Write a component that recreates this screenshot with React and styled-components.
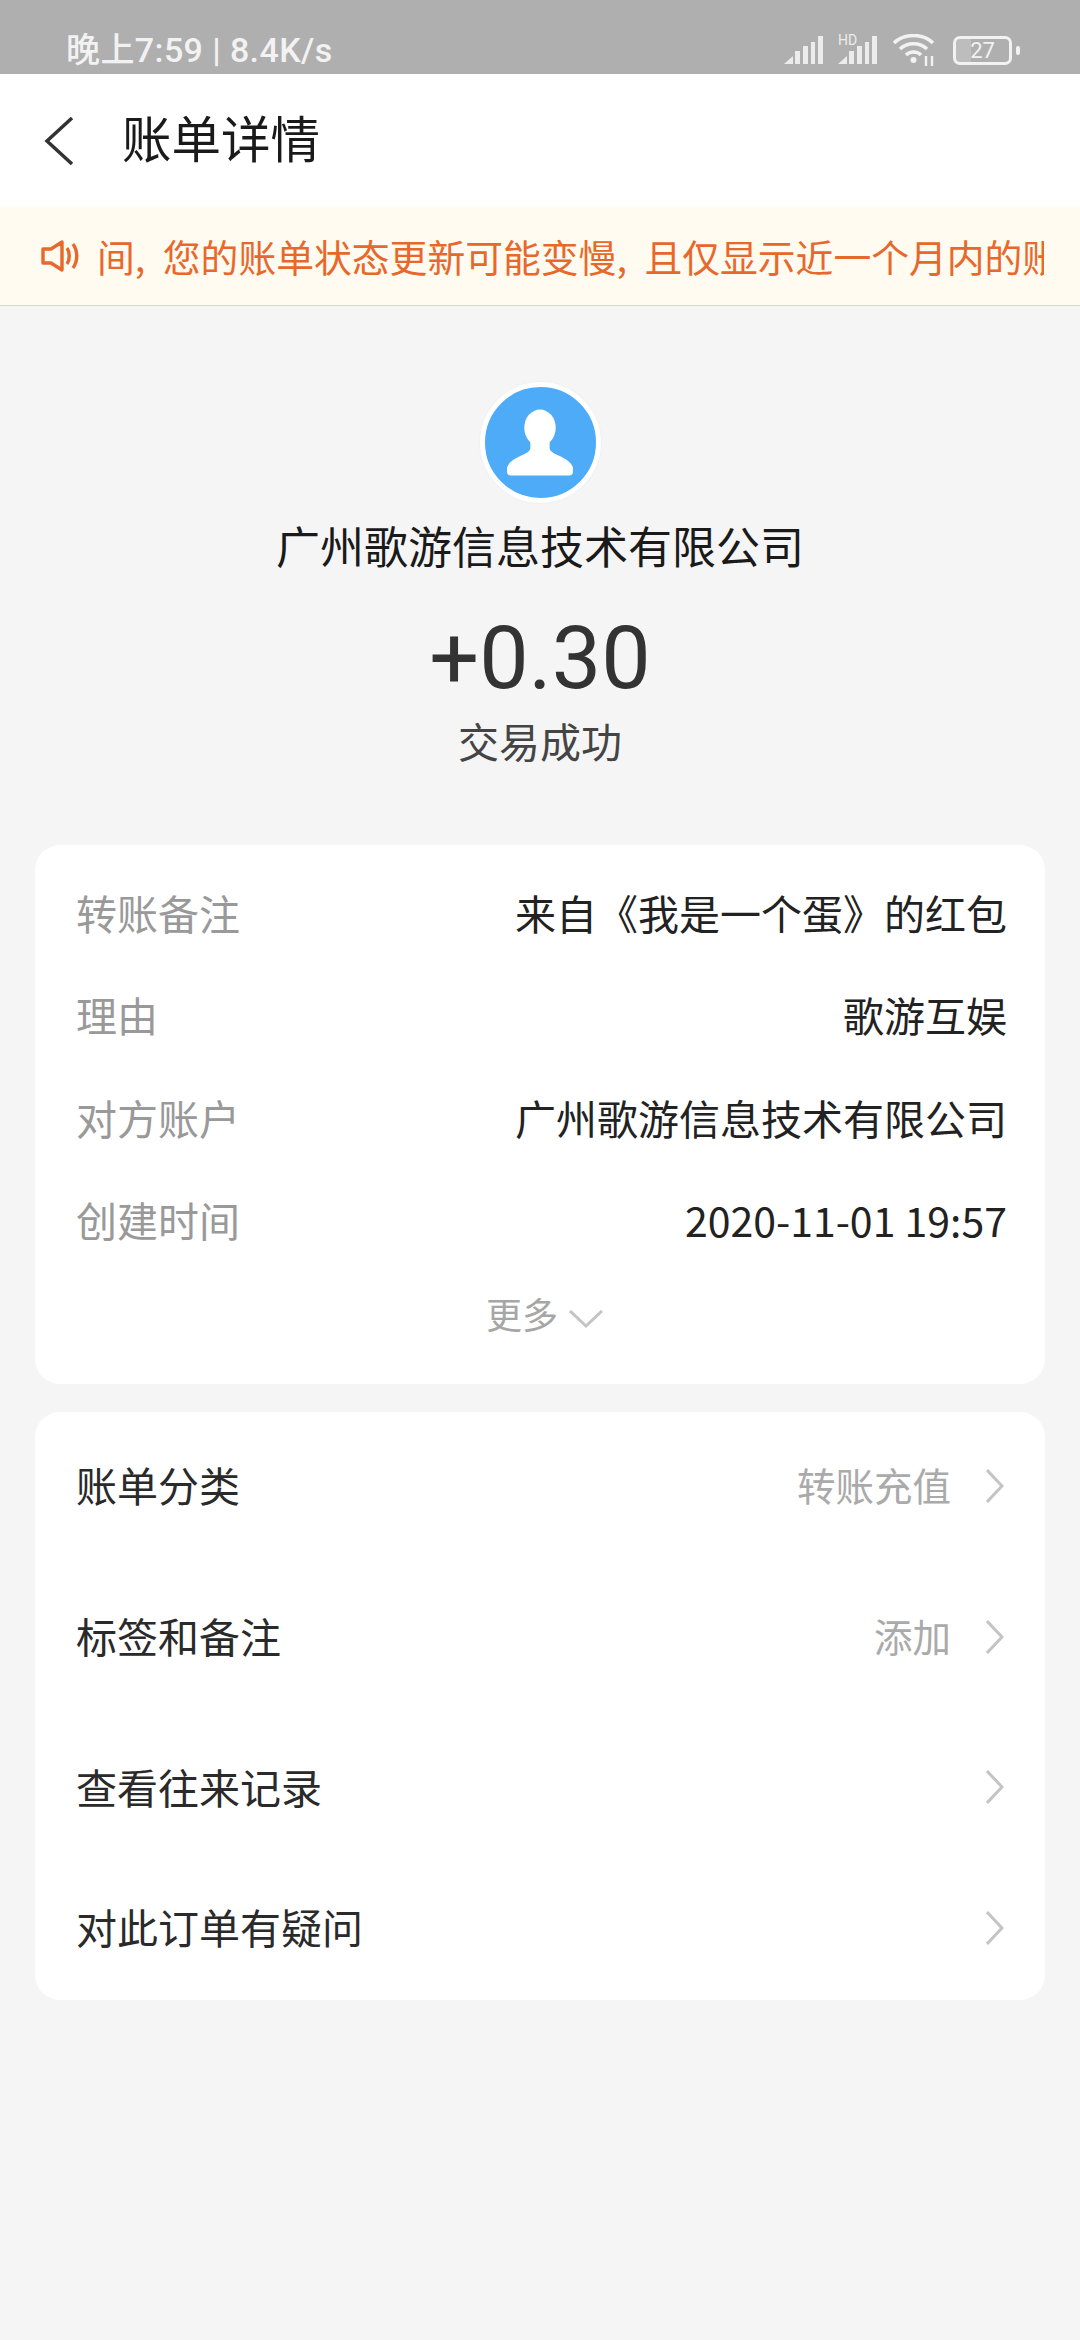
import React from "react";
import styled, { createGlobalStyle } from "styled-components";

const FONT = `"Noto Sans CJK SC", Roboto, "Noto Sans", sans-serif`;

const GlobalStyle = createGlobalStyle`
  html, body {
    margin: 0;
    padding: 0;
    background: #f5f5f5;
    font-family: ${FONT};
  }
`;

const Page = styled.div`
  width: 1080px;
  height: 2340px;
  background: #f5f5f5;
  overflow: hidden;
`;

const StatusBar = styled.div`
  height: 74px;
  background: #afafaf;
  display: flex;
  align-items: center;
  justify-content: space-between;
  padding: 26px 60px 0 66px;
  box-sizing: border-box;
  color: #f2f2f2;
`;

const StatusText = styled.span`
  font-family: Roboto, ${FONT};
  font-size: 34px;
  line-height: 42px;
  font-weight: 500;
  letter-spacing: 0.4px;
`;

const StatusIcons = styled.div`
  display: flex;
  align-items: center;
  gap: 15px;
`;

const Header = styled.header`
  height: 133px;
  background: #fff;
  display: flex;
  align-items: center;
  padding-left: 44px;
  gap: 48px;
`;

const Title = styled.h1`
  margin: 0 0 8px;
  font-size: 49.5px;
  line-height: 60px;
  font-weight: 400;
  color: #1a1a1a;
`;

const Notice = styled.div`
  height: 98px;
  background: #fffbf0;
  border-bottom: 1px solid #d8d6c8;
  display: flex;
  align-items: center;
  padding-left: 41px;
  gap: 18px;
`;

const NoticeText = styled.div`
  width: 947px;
  overflow: hidden;
  white-space: nowrap;
  font-size: 37.8px;
  line-height: 48px;
  color: #e8682c;
`;

const Comma = styled.span`
  display: inline-block;
  width: 28px;
`;

const Summary = styled.section`
  display: flex;
  flex-direction: column;
  align-items: center;
  padding-top: 76px;
  height: 539px;
  box-sizing: border-box;
`;

const Avatar = styled.div`
  width: 121px;
  height: 121px;
  box-sizing: border-box;
  border-radius: 50%;
  background: #4dabf7;
  border: 5px solid #fff;
  box-shadow: 0 0 2px #e6e6e6;
  display: flex;
  align-items: center;
  justify-content: center;
`;

const Company = styled.div`
  margin-top: 13px;
  font-size: 44px;
  line-height: 58px;
  color: #1a1a1a;
`;

const Amount = styled.div`
  margin-top: 31px;
  font-family: Roboto, sans-serif;
  font-size: 88px;
  line-height: 106px;
  color: #333;
`;

const Status = styled.div`
  margin-top: 3px;
  font-size: 41px;
  line-height: 52px;
  color: #444;
`;

const Card = styled.section`
  margin: 0 35px;
  background: #fff;
  border-radius: 25px;
  padding: 0 41px;
`;

const DetailCard = styled(Card)`
  height: 539px;
  padding: 16px 38px 0 41px;
  box-sizing: border-box;
`;

const DetailRow = styled.div`
  height: 102.3px;
  display: flex;
  justify-content: space-between;
  align-items: center;
  font-size: 41px;
`;

const Label = styled.span`
  color: #999;
`;

const Value = styled.span`
  color: #222;
  font-family: ${FONT};
`;

const More = styled.div`
  display: flex;
  justify-content: center;
  align-items: center;
  gap: 11px;
  margin: 19px 0 0 6px;
  font-size: 36px;
  line-height: 48px;
  color: #a6a6a6;
`;

const MoreArrow = styled.span`
  display: flex;
  margin-top: 12px;
`;

const ActionCard = styled(Card)`
  margin-top: 28px;
  height: 588px;
  box-sizing: border-box;
`;

const ActionRow = styled.div`
  height: ${(p) => p.$h}px;
  display: flex;
  align-items: center;
  justify-content: space-between;
  font-size: 41px;
  color: #2a2a2a;
`;

const ActionEnd = styled.div`
  display: flex;
  align-items: center;
  gap: 35px;
  color: #aaa;
  font-size: 38.5px;
`;

const ArrowSlot = styled.span`
  display: flex;
  margin-top: 3px;
`;

const Chevron = ({ d, w, h, color = "#c4c4c4", sw = 3 }) => (
  <svg width={w} height={h} viewBox={`0 0 ${w} ${h}`} fill="none">
    <path d={d} stroke={color} strokeWidth={sw} strokeLinejoin="miter" />
  </svg>
);

const SignalBars = () => (
  <>
    <path d="M0 30 L9 22 V30 Z" />
    <rect x="11" y="17" width="5" height="13" />
    <rect x="19" y="12" width="5" height="18" />
    <rect x="27" y="8" width="4" height="22" />
    <rect x="34" y="2" width="5" height="28" />
  </>
);

const Signal = () => (
  <svg width="39" height="32" viewBox="0 0 39 32" fill="#ececec">
    <SignalBars />
  </svg>
);

const HdSignal = () => (
  <svg width="40" height="40" viewBox="0 -4 40 40" fill="#ececec">
    <SignalBars />
    <text x="0" y="11" fontSize="14" fontFamily="Roboto, sans-serif">HD</text>
  </svg>
);

const Wifi = () => (
  <svg width="44" height="32" viewBox="0 0 44 32" fill="none" stroke="#f2f2f2" strokeWidth="3.5">
    <path d="M1 9 C11 -1 30 -1 40 9" />
    <path d="M7 15 C14 8 27 8 34 15" />
    <path d="M13 21 C17 17 24 17 28 21" />
    <circle cx="20.5" cy="26" r="3" fill="#f2f2f2" stroke="none" />
    <path d="M33 22 V32 M39 22 V32" strokeWidth="2.4" />
  </svg>
);

const BatteryBody = styled.div`
  width: 59px;
  height: 29px;
  box-sizing: border-box;
  border: 3px solid #f2f2f2;
  border-radius: 7px;
  display: flex;
  align-items: center;
  justify-content: center;
  font-family: Roboto, sans-serif;
  font-size: 22px;
  color: #f2f2f2;
  background: linear-gradient(90deg, #bdbdbd 28%, transparent 28%);
`;

const Battery = styled.div`
  display: flex;
  align-items: center;
  gap: 4px;
  margin-left: 1px;
  &::after {
    content: "";
    width: 4px;
    height: 9px;
    background: #f2f2f2;
    border-radius: 2px;
  }
`;

const DETAILS = [
  ["转账备注", "来自《我是一个蛋》的红包"],
  ["理由", "歌游互娱"],
  ["对方账户", "广州歌游信息技术有限公司"],
  ["创建时间", "2020-11-01 19:57"],
];

const ACTIONS = [
  { label: "账单分类", value: "转账充值", h: 144 },
  { label: "标签和备注", value: "添加", h: 158 },
  { label: "查看往来记录", h: 143 },
  { label: "对此订单有疑问", h: 138 },
];

export default function App() {
  return (
    <Page>
      <GlobalStyle />
      <StatusBar>
        <StatusText>晚上7:59 | 8.4K/s</StatusText>
        <StatusIcons>
          <Signal />
          <HdSignal />
          <Wifi />
          <Battery>
            <BatteryBody>27</BatteryBody>
          </Battery>
        </StatusIcons>
      </StatusBar>
      <Header>
        <Chevron w={30} h={48} d="M28 1 L3 24 L28 47" color="#333" sw={3.5} />
        <Title>账单详情</Title>
      </Header>
      <Notice>
        <svg width="38" height="32" viewBox="0 0 38 32" fill="none" stroke="#e8682c" strokeWidth="3.4">
          <path d="M2 9 H10 L21 2 V30 L10 23 H2 Z" strokeLinejoin="round" />
          <path d="M26 8 C29 12 29 20 26 24" />
          <path d="M32 4 C37 11 37 21 32 28" />
        </svg>
        <NoticeText>
          间<Comma>,</Comma>您的账单状态更新可能变慢<Comma>,</Comma>且仅显示近一个月内的账单
        </NoticeText>
      </Notice>
      <Summary>
        <Avatar>
          <svg width="66" height="67" viewBox="0 0 65 65" fill="#fff">
            <ellipse cx="32.5" cy="18" rx="15.5" ry="18" />
            <path d="M23 30 V38 C23 45 4 46 0 57 V61 Q0 65 4 65 H61 Q65 65 65 61 V57 C61 46 42 45 42 38 V30 Z" />
          </svg>
        </Avatar>
        <Company>广州歌游信息技术有限公司</Company>
        <Amount>+0.30</Amount>
        <Status>交易成功</Status>
      </Summary>
      <DetailCard>
        {DETAILS.map(([label, value]) => (
          <DetailRow key={label}>
            <Label>{label}</Label>
            <Value>{value}</Value>
          </DetailRow>
        ))}
        <More>
          更多
          <MoreArrow>
            <Chevron w={34} h={18} d="M1 1 L17 16 L33 1" />
          </MoreArrow>
        </More>
      </DetailCard>
      <ActionCard>
        {ACTIONS.map((a) => (
          <ActionRow key={a.label} $h={a.h}>
            <span>{a.label}</span>
            <ActionEnd>
              {a.value && <span>{a.value}</span>}
              <ArrowSlot>
                <Chevron w={18} h={34} d="M1 1 L16 17 L1 33" />
              </ArrowSlot>
            </ActionEnd>
          </ActionRow>
        ))}
      </ActionCard>
    </Page>
  );
}
